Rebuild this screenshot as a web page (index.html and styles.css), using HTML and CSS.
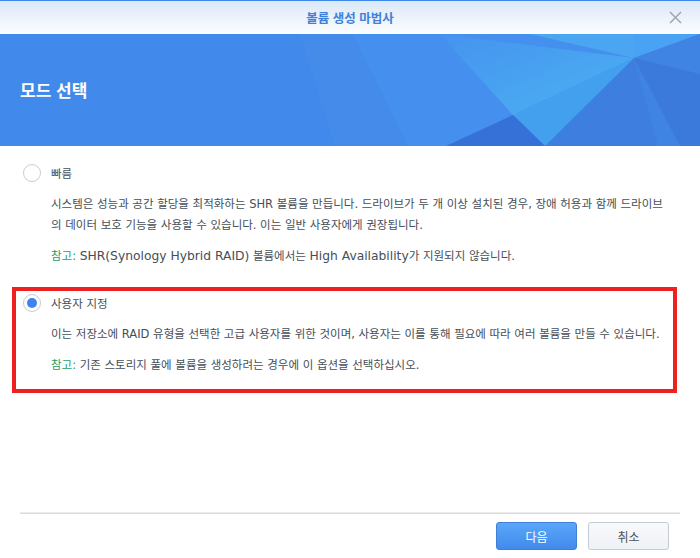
FILE: index.html
```html
<!DOCTYPE html>
<html lang="ko">
<head>
    <meta charset="UTF-8">
    <link rel="stylesheet" href="styles.css">
</head>
<body>
    <div class="wizard">
        <div class="wizard-title">
            <span></span>
            <span class="wizard-title-text">볼륨 생성 마법사</span>
            <span class="wizard-close">
                <svg width="13" height="13" viewBox="0 0 13 13">
                    <path d="M1 1 L12 12 M12 1 L1 12" stroke="#a2a6ab" stroke-width="1.5" fill="none"/>
                </svg>
            </span>
        </div>

        <div class="wizard-banner">
            <svg class="banner-art" width="700" height="112" viewBox="0 0 700 112">
                <defs>
                    <linearGradient id="cyan" x1="0" y1="0" x2="1" y2="1">
                        <stop offset="0" stop-color="#4593ef"/>
                        <stop offset="1" stop-color="#4cb2f2"/>
                    </linearGradient>
                </defs>
                <polygon points="300,0 353,0 408,112 335,112" fill="#ffffff" opacity="0.025"/>
                <polygon points="353,0 634,0 634,24 513,81 446,112 408,112" fill="#4590ee"/>
                <polygon points="440,0 634,24 513,81" fill="url(#cyan)"/>
                <polygon points="530,0 634,0 634,24" fill="#4ba6f1"/>
                <polygon points="634,0 700,0 634,24" fill="#49a2f3"/>
                <polygon points="634,24 700,0 700,112 658,112" fill="#3f84e3"/>
                <polygon points="634,24 700,40 700,112 680,112" fill="#3b79da"/>
                <polygon points="634,24 545,112 658,112" fill="#3d7edf"/>
                <polygon points="513,81 634,24 545,112" fill="#43a0ee"/>
                <polygon points="513,81 446,112 545,112" fill="#3671d7"/>
            </svg>
            <div class="wizard-banner-text">모드 선택</div>
        </div>

        <div class="wizard-body">
            <div class="option">
                <div class="option-head">
                    <span class="radio"></span>
                    <span class="option-label">빠름</span>
                </div>
                <div class="option-body">
                    <p class="option-desc">시스템은 성능과 공간 할당을 최적화하는 SHR 볼륨을 만듭니다. 드라이브가 두 개 이상 설치된 경우, 장애 허용과 함께 드라이브의 데이터 보호 기능을 사용할 수 있습니다. 이는 일반 사용자에게 권장됩니다.</p>
                    <p class="option-note"><span class="note-tag">참고:</span> <span class="en">SHR(Synology Hybrid RAID)</span> 볼륨에서는 <span class="en">High Availability</span>가 지원되지 않습니다.</p>
                </div>
            </div>

            <div class="option option-custom">
                <div class="option-head">
                    <span class="radio radio-checked"></span>
                    <span class="option-label">사용자 지정</span>
                </div>
                <div class="option-body">
                    <p class="option-desc">이는 저장소에 RAID 유형을 선택한 고급 사용자를 위한 것이며, 사용자는 이를 통해 필요에 따라 여러 볼륨을 만들 수 있습니다.</p>
                    <p class="option-note"><span class="note-tag">참고:</span> 기존 스토리지 풀에 볼륨을 생성하려는 경우에 이 옵션을 선택하십시오.</p>
                </div>
                <div class="highlight"></div>
            </div>
        </div>

        <div class="wizard-footer">
            <button class="btn btn-primary">다음</button>
            <button class="btn">취소</button>
        </div>
    </div>
</body>
</html>
```

FILE: styles.css
```css
body {
    margin: 0;
    background-color: #ffffff;
    font-family: "DejaVu Sans", "Noto Sans CJK KR", sans-serif;
    font-size: 11.5px;
    color: #454e58;
}

.en {
    font-size: 12.3px;
}

.wizard {
    width: 700px;
    height: 558px;
    display: flex;
    flex-direction: column;
    overflow: hidden;
}

.wizard-title {
    height: 33px;
    border-top: 1px solid #3d86ea;
    background: linear-gradient(#dbe8f8, #fbfdff);
    display: grid;
    grid-template-columns: 1fr auto 1fr;
    align-items: center;
}

.wizard-title-text {
    font-family: "Noto Sans CJK KR", sans-serif;
    font-weight: bold;
    font-size: 12.5px;
    color: #3f80da;
}

.wizard-close {
    justify-self: end;
    padding-right: 18px;
    display: flex;
}

.wizard-banner {
    height: 112px;
    background-color: #4189ea;
    position: relative;
    display: flex;
    align-items: center;
    flex-shrink: 0;
}

.banner-art {
    position: absolute;
    top: 0;
    left: 0;
}

.wizard-banner-text {
    position: relative;
    padding-left: 20px;
    padding-bottom: 2px;
    font-family: "Noto Sans CJK KR", sans-serif;
    font-weight: bold;
    font-size: 17px;
    color: #ffffff;
}

.wizard-body {
    flex-grow: 1;
    padding-top: 18px;
}

.option {
    padding-left: 23px;
    padding-right: 28px;
}

.option-custom {
    position: relative;
    margin-top: 27px;
}

.option-head {
    display: flex;
    align-items: center;
    gap: 10px;
    height: 18px;
}

.radio {
    width: 16px;
    height: 16px;
    border: 1px solid #c6cdd7;
    border-radius: 50%;
    background-color: #ffffff;
    display: flex;
    align-items: center;
    justify-content: center;
}

.radio-checked::after {
    content: "";
    width: 10px;
    height: 10px;
    border-radius: 50%;
    background-color: #3d84ef;
}

.option-body {
    padding-left: 28px;
}

.option-desc,
.option-note {
    margin: 0;
    line-height: 21px;
}

.option-desc {
    margin-top: 12px;
}

.option-note {
    margin-top: 10px;
}

.note-tag {
    color: #23a068;
}

.highlight {
    position: absolute;
    top: -7px;
    left: 12px;
    right: 23px;
    bottom: -17px;
    border: 4px solid #ee2020;
}

.wizard-footer {
    margin: 0 20px;
    border-top: 1px solid #ebebeb;
    box-shadow: inset 0 1px 0 #dcdcdc;
    padding: 9px 11px 8px 0;
    display: flex;
    justify-content: flex-end;
    gap: 11px;
}

.btn {
    width: 81px;
    height: 28px;
    border: 1px solid #c4cbd5;
    border-radius: 3px;
    background: linear-gradient(#f8f9fb, #eef1f5);
    font-family: "Noto Sans CJK KR", sans-serif;
    font-size: 12px;
    color: #4a525b;
    cursor: pointer;
}

.btn-primary {
    border-color: #3f7fd6;
    background: linear-gradient(#5aa6f9, #428aec);
    color: #ffffff;
}
```
